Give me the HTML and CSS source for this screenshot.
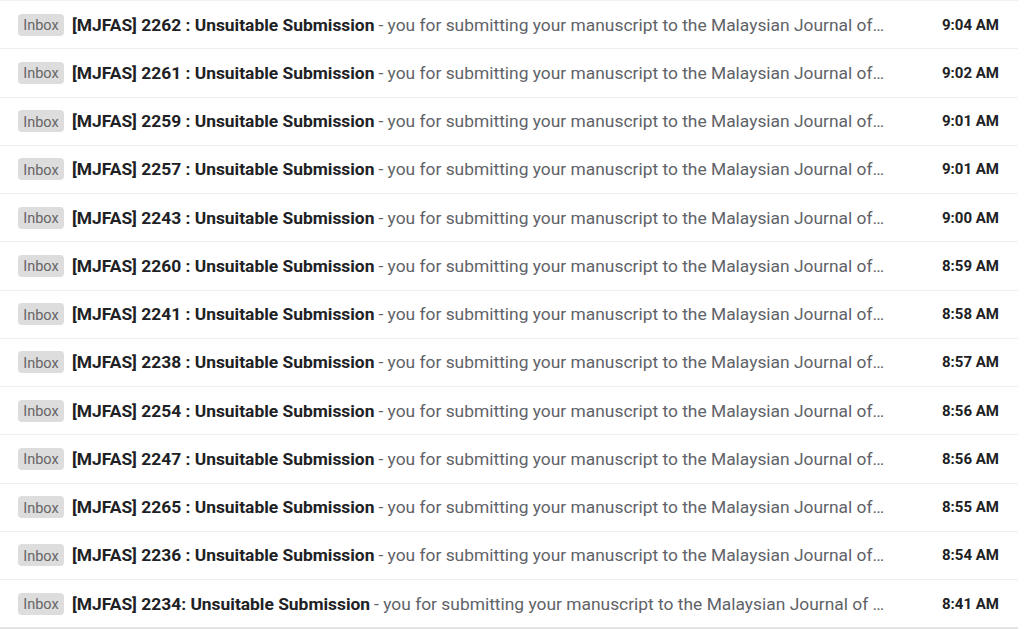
FILE: index.html
```html
<!DOCTYPE html>
<html>

<head>
  <meta charset="utf-8">
  <title>Inbox</title>
  <link rel="stylesheet" href="styles.css">
</head>

<body>
  <div class="mail-list">
    <div class="mail-row">
      <span class="label">Inbox</span>
      <span class="subject">[MJFAS] 2262 : Unsuitable Submission</span>
      <span class="snippet">- you for submitting your manuscript to the Malaysian Journal of…</span>
      <span class="time">9:04 AM</span>
    </div>
    <div class="mail-row">
      <span class="label">Inbox</span>
      <span class="subject">[MJFAS] 2261 : Unsuitable Submission</span>
      <span class="snippet">- you for submitting your manuscript to the Malaysian Journal of…</span>
      <span class="time">9:02 AM</span>
    </div>
    <div class="mail-row">
      <span class="label">Inbox</span>
      <span class="subject">[MJFAS] 2259 : Unsuitable Submission</span>
      <span class="snippet">- you for submitting your manuscript to the Malaysian Journal of…</span>
      <span class="time">9:01 AM</span>
    </div>
    <div class="mail-row">
      <span class="label">Inbox</span>
      <span class="subject">[MJFAS] 2257 : Unsuitable Submission</span>
      <span class="snippet">- you for submitting your manuscript to the Malaysian Journal of…</span>
      <span class="time">9:01 AM</span>
    </div>
    <div class="mail-row">
      <span class="label">Inbox</span>
      <span class="subject">[MJFAS] 2243 : Unsuitable Submission</span>
      <span class="snippet">- you for submitting your manuscript to the Malaysian Journal of…</span>
      <span class="time">9:00 AM</span>
    </div>
    <div class="mail-row">
      <span class="label">Inbox</span>
      <span class="subject">[MJFAS] 2260 : Unsuitable Submission</span>
      <span class="snippet">- you for submitting your manuscript to the Malaysian Journal of…</span>
      <span class="time">8:59 AM</span>
    </div>
    <div class="mail-row">
      <span class="label">Inbox</span>
      <span class="subject">[MJFAS] 2241 : Unsuitable Submission</span>
      <span class="snippet">- you for submitting your manuscript to the Malaysian Journal of…</span>
      <span class="time">8:58 AM</span>
    </div>
    <div class="mail-row">
      <span class="label">Inbox</span>
      <span class="subject">[MJFAS] 2238 : Unsuitable Submission</span>
      <span class="snippet">- you for submitting your manuscript to the Malaysian Journal of…</span>
      <span class="time">8:57 AM</span>
    </div>
    <div class="mail-row">
      <span class="label">Inbox</span>
      <span class="subject">[MJFAS] 2254 : Unsuitable Submission</span>
      <span class="snippet">- you for submitting your manuscript to the Malaysian Journal of…</span>
      <span class="time">8:56 AM</span>
    </div>
    <div class="mail-row">
      <span class="label">Inbox</span>
      <span class="subject">[MJFAS] 2247 : Unsuitable Submission</span>
      <span class="snippet">- you for submitting your manuscript to the Malaysian Journal of…</span>
      <span class="time">8:56 AM</span>
    </div>
    <div class="mail-row">
      <span class="label">Inbox</span>
      <span class="subject">[MJFAS] 2265 : Unsuitable Submission</span>
      <span class="snippet">- you for submitting your manuscript to the Malaysian Journal of…</span>
      <span class="time">8:55 AM</span>
    </div>
    <div class="mail-row">
      <span class="label">Inbox</span>
      <span class="subject">[MJFAS] 2236 : Unsuitable Submission</span>
      <span class="snippet">- you for submitting your manuscript to the Malaysian Journal of…</span>
      <span class="time">8:54 AM</span>
    </div>
    <div class="mail-row">
      <span class="label">Inbox</span>
      <span class="subject">[MJFAS] 2234: Unsuitable Submission</span>
      <span class="snippet">- you for submitting your manuscript to the Malaysian Journal of …</span>
      <span class="time">8:41 AM</span>
    </div>
  </div>
</body>

</html>
```

FILE: styles.css
```css
html,
body {
  margin: 0;
  background-color: #fff;
}

body {
  font-family: Roboto, 'Liberation Sans', sans-serif;
  color: #202124;
  overflow: hidden;
}

.mail-list {
  width: 1018px;
  border-top: 1px solid #f1f1f1;
}

.mail-row {
  display: flex;
  align-items: center;
  height: 47.25px;
  padding: 0 19px 0 18px;
  border-bottom: 1px solid #efefef;
  white-space: nowrap;
}

.mail-row:last-child {
  border-bottom: 2px solid #e4e4e4;
}

.label {
  flex: none;
  display: flex;
  align-items: center;
  justify-content: center;
  box-sizing: border-box;
  width: 46px;
  height: 22px;
  padding-top: 2px;
  margin-right: 8px;
  font-size: 14.5px;
  color: #666;
  background-color: #dddddd;
  border-radius: 4px;
}

.subject {
  flex: none;
  font-size: 17.4px;
  font-weight: 700;
  color: #202124;
}

.snippet {
  flex: 1;
  margin-left: 4px;
  font-size: 17.4px;
  color: #5f6368;
  overflow: hidden;
}

.time {
  flex: none;
  font-size: 15px;
  font-weight: 700;
  color: #202124;
}
```
